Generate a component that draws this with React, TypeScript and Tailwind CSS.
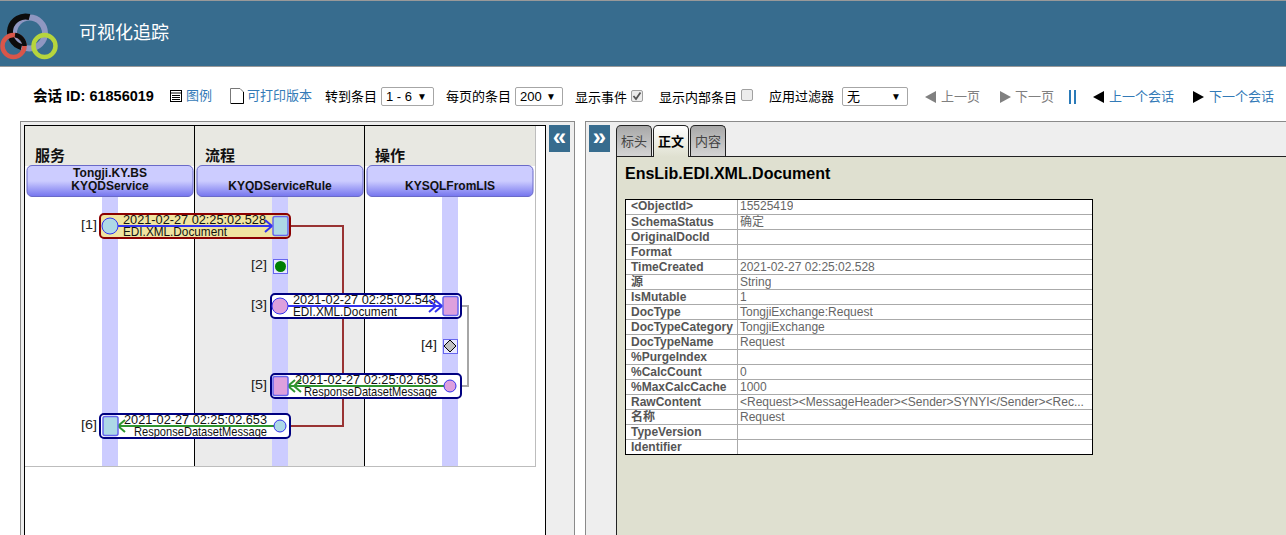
import React from "react";

const FONT = "font-['Liberation_Sans','Noto_Sans_CJK_SC',sans-serif]";

function Logo() {
  return (
    <svg width="58" height="56" viewBox="0 0 58 56" className="shrink-0">
      <circle cx="29.5" cy="27" r="15.5" fill="none" stroke="#8f97c1" strokeWidth="6" />
      <path d="M21.5 41 A15.5 15.5 0 0 1 29.5 11" fill="none" stroke="#0c0c0c" strokeWidth="6" />
      <circle cx="13.5" cy="40" r="11" fill="none" stroke="#d8564a" strokeWidth="4.5" />
      <path d="M15 29 A11 11 0 0 1 24.5 40" fill="none" stroke="#0c0c0c" strokeWidth="4.5" />
      <circle cx="44.5" cy="40" r="11" fill="none" stroke="#b6d53d" strokeWidth="4.5" />
    </svg>
  );
}

function Select({ value, w }: { value: string; w: string }) {
  return (
    <span className={`inline-flex h-[19px] items-center justify-between rounded-[2px] border border-[#a6a6a6] bg-white pl-[4px] pr-[6px] text-[13px] text-black ${w}`}>
      <span>{value}</span>
      <span className="text-[10px] leading-none">▼</span>
    </span>
  );
}

function Check({ on }: { on?: boolean }) {
  return (
    <span className="inline-flex h-[12px] w-[12px] items-center justify-center rounded-[2px] border border-[#a0a0a0] bg-[#ececec]">
      {on && (
        <svg width="10" height="10" viewBox="0 0 10 10">
          <path d="M1.5 5 L4 8 L8.5 1.5" fill="none" stroke="#555" strokeWidth="1.8" />
        </svg>
      )}
    </span>
  );
}

function Tri({ dir, color }: { dir: "l" | "r"; color: string }) {
  return (
    <svg width="11" height="12" viewBox="0 0 11 12" className="shrink-0">
      <path d={dir === "l" ? "M0 6 L11 0 V12 Z" : "M0 0 L11 6 L0 12 Z"} fill={color} />
    </svg>
  );
}

function Toolbar() {
  return (
    <div className="flex h-[54px] items-center pl-[33px] pt-[5px] text-[13px] text-black">
      <span className="text-[14.5px] font-bold">会话 ID: 61856019</span>
      <span className="ml-[16px] flex items-center text-[#337ab7]">
        <svg width="12" height="12" viewBox="0 0 12 12" className="mr-[4px] -mt-[2px]">
          <rect x="0.5" y="0.5" width="11" height="11" fill="#fff" stroke="#000" />
          <path d="M0 3 H12 M2 5.5 H10 M2 7.5 H10 M2 9.5 H10" stroke="#000" />
        </svg>
        <span className="-mt-[2px]">图例</span>
      </span>
      <span className="ml-[18px] flex items-center text-[#337ab7]">
        <svg width="14" height="16" viewBox="0 0 14 16" className="mr-[3px] -mt-[2px]">
          <path d="M0.5 0.5 H10 L13.5 4 V15.5 H0.5 Z" fill="#fff" stroke="#777" />
          <path d="M1 15.5 H13.5 V4" fill="none" stroke="#000" />
        </svg>
        <span className="-mt-[2px]">可打印版本</span>
      </span>
      <span className="ml-[13px]">转到条目</span>
      <span className="ml-[4px]"><Select value="1 - 6" w="w-[53px]" /></span>
      <span className="ml-[12px]">每页的条目</span>
      <span className="ml-[4px]"><Select value="200" w="w-[48px]" /></span>
      <span className="ml-[12px] mt-[3px]">显示事件</span>
      <span className="ml-[4px]"><Check on /></span>
      <span className="ml-[16px] mt-[3px]">显示内部条目</span>
      <span className="ml-[4px]"><Check /></span>
      <span className="ml-[16px] mt-[1px]">应用过滤器</span>
      <span className="ml-[8px]"><Select value="无" w="w-[66px]" /></span>
      <span className="ml-[17px] flex items-center gap-[5px] text-[#808080]"><Tri dir="l" color="#808080" />上一页</span>
      <span className="ml-[20px] flex items-center gap-[4px] text-[#808080]"><Tri dir="r" color="#808080" />下一页</span>
      <span className="ml-[15px] flex h-[14px] gap-[3px]">
        <span className="w-[2px] bg-[#2a7ab8]" />
        <span className="w-[2px] bg-[#2a7ab8]" />
      </span>
      <span className="ml-[17px] flex items-center gap-[5px] text-[#337ab7]"><Tri dir="l" color="#000" />上一个会话</span>
      <span className="ml-[19px] flex items-center gap-[5px] text-[#337ab7]"><Tri dir="r" color="#000" />下一个会话</span>
    </div>
  );
}

const SVGFONT = "'Liberation Sans','Noto Sans CJK SC',sans-serif";

function ColHead({ x, a, b }: { x: number; a?: string; b: string }) {
  return (
    <g>
      <rect x={x} y="165.5" width="166" height="31" rx="5" fill="url(#hd)" stroke="#6a6ac8" />
      {a && (
        <text x={x + 83} y="177" textAnchor="middle" fontSize="12" fontWeight="bold" fontFamily={SVGFONT} fill="#111">{a}</text>
      )}
      <text x={x + 83} y="190" textAnchor="middle" fontSize="12" fontWeight="bold" fontFamily={SVGFONT} fill="#111">{b}</text>
    </g>
  );
}

function Label({ x, y, t }: { x: number; y: number; t: string }) {
  return (
    <text x={x} y={y} fontSize="13" fontFamily={SVGFONT} fill="#222" textLength="16" lengthAdjust="spacingAndGlyphs">{t}</text>
  );
}

function Msg({ x, y, t1, t1x, t2, t2x, t2w, stroke, fill }: { x: number; y: number; t1: string; t1x: number; t2: string; t2x: number; t2w: number; stroke: string; fill: string }) {
  return (
    <g>
      <rect x={x} y={y} width="190" height="24" rx="4" fill={fill} stroke={stroke} strokeWidth="2" />
      <text x={t1x} y={y + 10} fontSize="13" fontFamily={SVGFONT} fill="#111" textLength="143" lengthAdjust="spacingAndGlyphs">{t1}</text>
      <text x={t2x} y={y + 22} fontSize="13" fontFamily={SVGFONT} fill="#111" textLength={t2w} lengthAdjust="spacingAndGlyphs">{t2}</text>
    </g>
  );
}

function ArrowR({ x1, x2, y, double }: { x1: number; x2: number; y: number; double?: boolean }) {
  return (
    <g fill="none" stroke="#3333ee" strokeWidth="2">
      <path d={`M${x1} ${y} H${x2}`} />
      <path d={`M${x2 - 7} ${y - 6} L${x2} ${y} L${x2 - 7} ${y + 6}`} />
      {double && <path d={`M${x2 - 13} ${y - 6} L${x2 - 6} ${y} L${x2 - 13} ${y + 6}`} />}
    </g>
  );
}

function ArrowL({ x1, x2, y, double }: { x1: number; x2: number; y: number; double?: boolean }) {
  return (
    <g fill="none" stroke="#2f952f" strokeWidth="2">
      <path d={`M${x1} ${y} H${x2}`} />
      <path d={`M${x2 + 7} ${y - 6} L${x2} ${y} L${x2 + 7} ${y + 6}`} />
      {double && <path d={`M${x2 + 13} ${y - 6} L${x2 + 6} ${y} L${x2 + 13} ${y + 6}`} />}
    </g>
  );
}

function Diagram() {
  const colTitle = (x: number, t: string) => (
    <text x={x} y="161" fontSize="15" fontWeight="bold" fontFamily={SVGFONT} fill="#111">{t}</text>
  );
  return (
    <svg width="512" height="345" viewBox="25 126 512 345" className="block">
      <defs>
        <linearGradient id="hd" x1="0" y1="0" x2="0" y2="1">
          <stop offset="0" stopColor="#ccccff" />
          <stop offset="0.5" stopColor="#ccccff" />
          <stop offset="1" stopColor="#7474ee" />
        </linearGradient>
      </defs>
      <rect x="195" y="166" width="170" height="300" fill="#ebebeb" />
      <rect x="25" y="126" width="510" height="40" fill="#e8e8e2" />
      <rect x="102" y="196" width="16" height="270" fill="#ccccff" />
      <rect x="272" y="196" width="16" height="270" fill="#ccccff" />
      <rect x="442" y="196" width="16" height="270" fill="#ccccff" />
      <path d="M194.5 126 V466 M364.5 126 V466" stroke="#000" strokeWidth="1" />
      <path d="M25 466.5 H536 M535.5 126 V466" stroke="#bdbdbd" strokeWidth="1" fill="none" />
      {colTitle(35, "服务")}
      {colTitle(205, "流程")}
      {colTitle(375, "操作")}
      <ColHead x={27} a="Tongji.KY.BS" b="KYQDService" />
      <ColHead x={197} b="KYQDServiceRule" />
      <ColHead x={367} b="KYSQLFromLIS" />

      <path d="M290 226 H343 V426 H290" fill="none" stroke="#993333" strokeWidth="2" />
      <path d="M460 306 H468 V386 H460" fill="none" stroke="#a6a6a6" strokeWidth="2" />

      <Label x={81} y={229} t="[1]" />
      <Msg x={100} y={214} fill="#f0e4a0" stroke="#8b0000" t1="2021-02-27 02:25:02.528" t1x={123} t2="EDI.XML.Document" t2x={123} t2w={104} />
      <ArrowR x1={118} x2={272} y={226} />
      <circle cx="110" cy="226" r="8" fill="#add8e6" stroke="#3333ee" />
      <rect x="273" y="216.5" width="15" height="19" rx="2" fill="#add8e6" stroke="#6666ee" strokeWidth="1.5" />

      <Label x={251} y={269} t="[2]" />
      <rect x="273.5" y="259.5" width="14" height="14" fill="#e8e8ff" stroke="#6666ee" />
      <circle cx="280.5" cy="266.5" r="5.5" fill="#008000" />

      <Label x={251} y={309} t="[3]" />
      <Msg x={271} y={294} fill="#ffffff" stroke="#000080" t1="2021-02-27 02:25:02.543" t1x={293} t2="EDI.XML.Document" t2x={293} t2w={104} />
      <ArrowR x1={288} x2={442} y={306} double />
      <circle cx="280" cy="306" r="8" fill="#dda0dd" stroke="#3333ee" />
      <rect x="443" y="296.5" width="15" height="19" rx="2" fill="#dda0dd" stroke="#6666ee" strokeWidth="1.5" />

      <Label x={421} y={349} t="[4]" />
      <rect x="443.5" y="339.5" width="14" height="14" fill="#e8e8ff" stroke="#6666ee" />
      <path d="M450 340 L456 346 L450 352 L444 346 Z" fill="#c0c0c0" stroke="#000" />

      <Label x={251} y={389} t="[5]" />
      <Msg x={271} y={374} fill="#ffffff" stroke="#000080" t1="2021-02-27 02:25:02.653" t1x={295} t2="ResponseDatasetMessage" t2x={304} t2w={133} />
      <ArrowL x1={444} x2={288} y={386} double />
      <circle cx="450" cy="386" r="6" fill="#dda0dd" stroke="#3333ee" />
      <rect x="273" y="376.5" width="15" height="19" rx="2" fill="#dda0dd" stroke="#6666ee" strokeWidth="1.5" />

      <Label x={81} y={429} t="[6]" />
      <Msg x={100} y={414} fill="#ffffff" stroke="#000080" t1="2021-02-27 02:25:02.653" t1x={124} t2="ResponseDatasetMessage" t2x={134} t2w={133} />
      <ArrowL x1={274} x2={118} y={426} />
      <circle cx="280" cy="426" r="6" fill="#add8e6" stroke="#3333ee" />
      <rect x="103" y="416.5" width="15" height="19" rx="2" fill="#add8e6" stroke="#6666ee" strokeWidth="1.5" />
    </svg>
  );
}

const rows: [string, string][] = [
  ["<ObjectId>", "15525419"],
  ["SchemaStatus", "确定"],
  ["OriginalDocId", ""],
  ["Format", ""],
  ["TimeCreated", "2021-02-27 02:25:02.528"],
  ["源", "String"],
  ["IsMutable", "1"],
  ["DocType", "TongjiExchange:Request"],
  ["DocTypeCategory", "TongjiExchange"],
  ["DocTypeName", "Request"],
  ["%PurgeIndex", ""],
  ["%CalcCount", "0"],
  ["%MaxCalcCache", "1000"],
  ["RawContent", "<Request><MessageHeader><Sender>SYNYI</Sender><Rec..."],
  ["名称", "Request"],
  ["TypeVersion", ""],
  ["Identifier", ""],
];

function PropTable() {
  return (
    <div className="ml-[8px] mt-[34px] w-[468px] border border-black bg-white text-[12px] leading-[14px] text-[#666]">
      {rows.map(([k, v], i) => (
        <div key={k} className={`flex ${i ? "h-[15px] border-t border-[#aaaaaa]" : "h-[14px] leading-[12px]"}`}>
          <div className="w-[112px] shrink-0 truncate border-r border-[#aaaaaa] pl-[5px] font-bold text-[#555]">{k}</div>
          <div className="truncate pl-[2px]">{v}</div>
        </div>
      ))}
    </div>
  );
}

function Tab({ t, active }: { t: string; active?: boolean }) {
  return (
    <div
      className={`relative flex h-[31px] w-[36px] items-start justify-center rounded-t-[5px] border border-b-0 border-[#222] pt-[6px] text-[13px] ${
        active
          ? "z-10 -mb-px h-[32px] bg-gradient-to-b from-white to-[#dfe0d0] font-bold text-black"
          : "bg-gradient-to-b from-[#a8a8a8] to-[#d4d4d4] text-[#444]"
      }`}
    >
      {t}
    </div>
  );
}

function Collapse({ t }: { t: string }) {
  return (
    <div className="flex h-[27px] w-[21px] shrink-0 items-center justify-center bg-[#376c8e] pb-[4px] text-[24px] font-bold leading-none text-white">
      {t}
    </div>
  );
}

export default function App() {
  return (
    <div className={`h-[535px] w-[1286px] overflow-hidden bg-white ${FONT}`}>
      <header className="flex h-[67px] items-center border-y border-[#999] bg-[#376c8e]">
        <Logo />
        <span className="ml-[21px] text-[18px] text-white">可视化追踪</span>
      </header>
      <Toolbar />
      <main className="flex h-[414px] items-stretch">
        <section className="ml-[20px] flex w-[555px] border border-b-0 border-[#8a8a8a] bg-[#eeeeee] pl-[3px] pt-[3px] pr-[3px]">
          <div className="w-[522px] border border-b-0 border-black bg-white">
            <Diagram />
          </div>
          <div className="ml-[3px]"><Collapse t="«" /></div>
        </section>
        <section className="ml-[10px] flex flex-1 border-l border-t border-[#8a8a8a] bg-[#eeeeee] pl-[3px] pt-[3px]">
          <Collapse t="»" />
          <div className="ml-[6px] flex min-w-0 flex-1 flex-col">
            <div className="flex h-[31px] gap-[1px]">
              <Tab t="标头" />
              <Tab t="正文" active />
              <Tab t="内容" />
            </div>
            <div className="flex-1 border-l border-t border-[#222] bg-[#dfe0d0]">
              <h2 className="ml-[8px] mt-[8px] h-0 text-[16px] font-bold leading-[18px] text-black">EnsLib.EDI.XML.Document</h2>
              <PropTable />
            </div>
          </div>
        </section>
      </main>
    </div>
  );
}
